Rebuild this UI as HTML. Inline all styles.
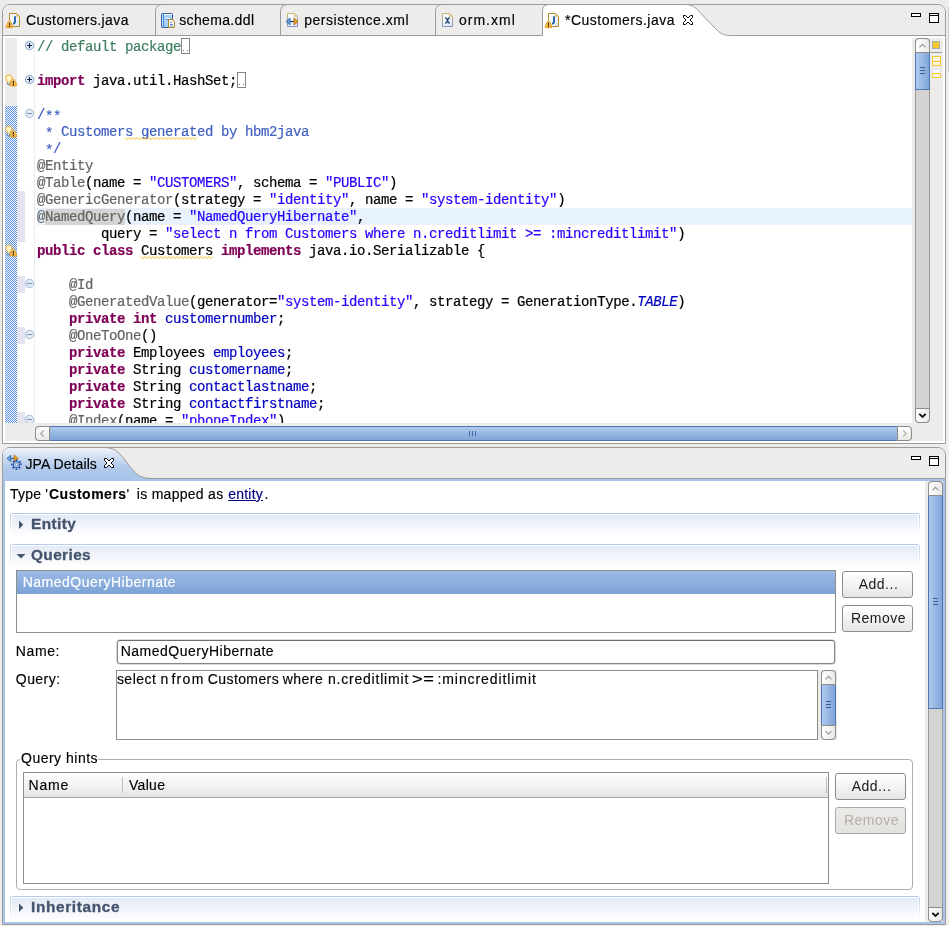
<!DOCTYPE html>
<html>
<head>
<meta charset="utf-8">
<title>Eclipse</title>
<style>
html,body{margin:0;padding:0;}
body{width:949px;height:926px;overflow:hidden;background:#edeceb;position:relative;font-family:"Liberation Sans",sans-serif;font-size:14px;color:#1a1a1a;}
div,span{box-sizing:border-box;}
.a{position:absolute;}
svg{position:absolute;overflow:visible;}
.t{position:absolute;white-space:pre;line-height:16px;height:16px;font-size:14px;color:#000;-webkit-text-stroke:0.15px;}
.ln{position:absolute;left:37px;margin-top:1px;height:17px;line-height:17px;white-space:pre;color:#000;font-family:"Liberation Mono",monospace;font-size:14px;letter-spacing:-0.4px;-webkit-text-stroke:0.2px;}
.k{color:#7f0055;font-weight:bold;}
.s{color:#2a00ff;}
.c{color:#3f7f5f;}
.j{color:#3f5fbf;}
.an{color:#646464;}
.f{color:#0000c0;}
.fi{color:#0000c0;font-style:italic;}
.as{position:relative;top:2px;}
.bx{position:absolute;width:9px;height:16px;border:1px solid #858585;}
.btn{position:absolute;border:1px solid #8f8d8a;border-radius:3px;background:linear-gradient(#ffffff,#f4f3f2 50%,#e7e6e4);text-align:center;font-size:14px;line-height:24px;color:#1a1a1a;}
.sec{position:absolute;left:10px;width:910px;height:24px;border:1px solid transparent;border-bottom:none;border-radius:3px 3px 0 0;background:linear-gradient(#e2e9f5,#ffffff 95%) padding-box,linear-gradient(#b4caea,#ffffff 95%) border-box;box-shadow:inset 0 1px 0 0 #fff,inset 1px 0 0 0 #fff,inset -1px 0 0 0 #fff;}
.sect{position:absolute;font-weight:bold;font-size:14px;color:#46546e;white-space:pre;line-height:16px;-webkit-text-stroke:0.3px;transform:scaleX(1.1);transform-origin:0 0;}
.fold{position:absolute;width:9px;height:9px;border-radius:50%;border:1px solid #9fb6cf;background:#e9f1f8;}
</style>
</head>
<body>
<div id="root" style="position:absolute;left:0;top:0;width:949px;height:926px;will-change:transform;">
<svg width="0" height="0" style="left:0;top:0">
  <defs>
    <linearGradient id="gDoc" x1="0" y1="0" x2="1" y2="1"><stop offset="0" stop-color="#ffffff"/><stop offset="1" stop-color="#dbe7f7"/></linearGradient>
    <linearGradient id="gWarn" x1="0" y1="0" x2="0" y2="1"><stop offset="0" stop-color="#fff3b0"/><stop offset="1" stop-color="#f5a623"/></linearGradient>
    <linearGradient id="gDocB" x1="0" y1="0" x2="0" y2="1"><stop offset="0" stop-color="#c9b66f"/><stop offset="1" stop-color="#8494c4"/></linearGradient>
    <linearGradient id="gThumbV" x1="0" y1="0" x2="1" y2="0"><stop offset="0" stop-color="#a9c5ea"/><stop offset="1" stop-color="#7ea4d6"/></linearGradient>
    <linearGradient id="gThumbH" x1="0" y1="0" x2="0" y2="1"><stop offset="0" stop-color="#a9c5ea"/><stop offset="1" stop-color="#7ea4d6"/></linearGradient>
    <!-- warning triangle 8x8 at 0,0 -->
    <g id="warn">
      <path d="M3.5 0.4 C4.2 0.4 4.4 0.9 4.7 1.5 L6.7 5.8 C7.1 6.8 6.8 7.5 5.8 7.5 L1.2 7.5 C0.2 7.5 -0.1 6.8 0.3 5.8 L2.3 1.5 C2.6 0.9 2.8 0.4 3.5 0.4 Z" fill="url(#gWarn)" stroke="#e39a20" stroke-width="0.9"/>
      <rect x="2.9" y="2.3" width="1.2" height="2.8" fill="#3a2200"/>
      <rect x="2.9" y="5.6" width="1.2" height="1.2" fill="#3a2200"/>
    </g>
    <!-- java file with warning; origin = doc top-left minus (4,0): doc at x 4..15, y 0..14 -->
    <g id="jwarn">
      <path d="M4.5 0.5 L11.5 0.5 L14.5 3.5 L14.5 13.5 L4.5 13.5 Z" fill="url(#gDoc)" stroke="#b38b2d" stroke-width="1"/>
      <path d="M11.2 0.8 L11.2 3.8 L14.2 3.8 Z" fill="#e9c46a"/>
      <path d="M10 3.2 L10 8.6 Q10 10.6 8 10.6" fill="none" stroke="#2563a8" stroke-width="1.9"/>
      <use href="#warn" x="1" y="7.2"/>
    </g>
    <!-- quick-fix bulb + warning, 12x12 -->
    <g id="qf">
      <path d="M3.5 0.5 Q6.6 0.5 6.6 3.4 Q6.6 4.9 5.2 6.2 L5 8 L2 8 L1.8 6.2 Q0.4 4.9 0.4 3.4 Q0.4 0.5 3.5 0.5 Z" fill="#fff6c8" stroke="#e8a828" stroke-width="0.9"/>
      <path d="M2.2 8.3 Q2.2 10.6 3.5 10.6 Q4.8 10.6 4.8 8.3" fill="#e8eef8" stroke="#3f6aa8" stroke-width="0.9"/>
      <use href="#warn" x="4.6" y="4" transform="scale(1)"/>
    </g>
    <g id="fplus">
      <circle cx="4.5" cy="4.5" r="4.1" fill="#e1edf9" stroke="#9bb5d5" stroke-width="1.2"/>
      <path d="M2 4.5 H7 M4.5 2 V7" stroke="#18264a" stroke-width="1.1" fill="none"/>
    </g>
    <g id="fminus">
      <circle cx="4.5" cy="4.5" r="4.1" fill="#e2eff9" stroke="#b3c6da" stroke-width="1.2"/>
      <path d="M2 4.5 H7" stroke="#8793a6" stroke-width="1.1" fill="none"/>
    </g>
  </defs>
</svg>
<!-- ================= EDITOR PANEL ================= -->
<div class="a" style="left:2px;top:4px;width:944px;height:440px;border:1px solid #9e9c99;border-radius:8px 8px 0 0;background:#fff;"></div>
<div class="a" style="left:3px;top:5px;width:942px;height:30px;background:#edeceb;border-radius:7px 7px 0 0;"></div>
<div class="a" style="left:3px;top:35px;width:942px;height:1px;background:#9e9c99;"></div>
<div class="a" style="left:5px;top:38px;width:938px;height:403px;background:#edeceb;"></div>
<div class="a" style="left:17px;top:38px;width:895px;height:385px;background:#fff;"></div>
<div class="a" style="left:5px;top:38px;width:12px;height:385px;background:#edeceb;"></div>
<div class="a" style="left:34px;top:38px;width:1px;height:385px;background:#ececec;"></div>
<div class="a" style="left:37px;top:208px;width:875px;height:17px;background:#e8f2fe;"></div>
<!--TABS-->
<!-- tab separators & active tab -->
<svg width="949" height="40" style="left:0;top:0">
  <g fill="none" stroke="#9e9c99" stroke-width="1">
    <path d="M155.5 35 L155.5 12 Q155.5 4.5 162 4.5"/>
    <path d="M280.5 35 L280.5 12 Q280.5 4.5 287 4.5"/>
    <path d="M435.5 35 L435.5 12 Q435.5 4.5 442 4.5"/>
  </g>
  <!-- active tab -->
  <path d="M542.5 36 L542.5 11 Q542.5 4.5 549 4.5 L686 4.5 C693 5 696 8 700 12.5 L714 27 C718 31.5 722 35.5 730 35.5 L732 36 Z" fill="#ffffff" stroke="none"/>
  <path d="M542.5 35.5 L542.5 11 Q542.5 4.5 549 4.5 L686 4.5 C693 5 696 8 700 12.5 L714 27 C718 31.5 722 35.5 730 35.5" fill="none" stroke="#9e9c99"/>
  <!-- minimize -->
  <rect x="911.5" y="13.5" width="9" height="3" fill="#fff" stroke="#000"/>
  <!-- maximize -->
  <rect x="929.5" y="13.5" width="9" height="9" fill="#fff" stroke="#000"/>
  <rect x="929.5" y="13.5" width="9" height="2" fill="#fff" stroke="#000"/>
</svg>
<div class="t" style="left:26px;top:12px;letter-spacing:.4px">Customers.java</div>
<div class="t" style="left:179.2px;top:12px;letter-spacing:.36px">schema.ddl</div>
<div class="t" style="left:304.3px;top:12px;letter-spacing:.5px">persistence.xml</div>
<div class="t" style="left:459px;top:12px;letter-spacing:1.0px">orm.xml</div>
<div class="t" style="left:565px;top:12px;letter-spacing:.48px">*Customers.java</div>
<svg width="949" height="40" style="left:0;top:0">
  <use href="#jwarn" x="5" y="13"/>
  <use href="#jwarn" x="544" y="13"/>
  <!-- schema.ddl icon -->
  <g>
    <rect x="161.5" y="13.5" width="11" height="14" rx="0.8" fill="#a8d0f6" stroke="#3560ac"/>
    <path d="M163.5 14 V27" stroke="#4a86c8" stroke-width="1"/>
    <path d="M162.5 14.5 V26.5" stroke="#c5e0fa" stroke-width="1"/>
    <rect x="164" y="14" width="8" height="1" fill="#ffffff"/>
    <rect x="166" y="18" width="4" height="1" fill="#ffffff"/>
    <rect x="166" y="19" width="4" height="1" fill="#4f8fd0"/>
    <path d="M168.500 19.500 L172.500 19.500 L174.500 21.500 L174.500 27.500 L168.500 27.500 Z" fill="#fbfdff" stroke="#a88934"/>
    <path d="M172.300 19.800 V21.700 H174.200 Z" fill="#e9c46a"/>
    <path d="M170 22.500 H172 M170 24.500 H173 M170 26 H173" stroke="#6f8fd0" stroke-width="1"/>
  </g>
  <!-- persistence.xml icon -->
  <g>
    <path d="M287.5 13.5 L294.5 13.5 L297.5 16.5 L297.5 26.5 L287.5 26.5 Z" fill="url(#gDoc)" stroke="url(#gDocB)"/>
    <path d="M294.2 13.8 L294.2 16.8 L297.2 16.8 Z" fill="#e9c46a"/>
    <path d="M289 21.5 H295" stroke="#1d3468" stroke-width="1.2"/>
    <path d="M286 21.5 L290 18 L290 25 Z" fill="#6f9fe0" stroke="#1f5f9c" stroke-width="0.8"/>
    <path d="M298 21.5 L294 18 L294 25 Z" fill="#f0a020" stroke="#b06a08" stroke-width="0.8"/>
  </g>
  <!-- orm.xml icon -->
  <g>
    <path d="M442.5 13.5 L449.5 13.5 L452.5 16.5 L452.5 26.5 L442.5 26.5 Z" fill="url(#gDoc)" stroke="url(#gDocB)"/>
    <path d="M449.2 13.8 L449.2 16.8 L452.2 16.8 Z" fill="#e9c46a"/>
    <path d="M445.3 17.5 Q447.5 19 447.5 20.5 Q447.5 22 445.3 23.5 M449.7 17.5 Q447.5 19 447.5 20.5 Q447.5 22 449.7 23.5" stroke="#1f3f6e" stroke-width="1.5" fill="none"/>
  </g>
  <!-- close X -->
  <path d="M683.5 15.5 L685.5 15.5 L688 18 L690.5 15.5 L692.5 15.5 L692.5 17.5 L690 20 L692.5 22.5 L692.5 24.5 L690.5 24.5 L688 22 L685.5 24.5 L683.5 24.5 L683.5 22.5 L686 20 L683.5 17.5 Z" fill="#fff" stroke="#000" stroke-width="1"/>
</svg>
<!--/TABS-->
<!--RULER-->
<!-- range indicator (blue checker) -->
<div class="a" style="left:5px;top:106px;width:12px;height:317px;background:repeating-conic-gradient(#5f93de 0% 25%,#f4f8ff 0% 50%) 0 0/2px 2px;"></div>
<!-- quick diff lavender -->
<div class="a" style="left:17px;top:191px;width:8px;height:51px;background:#e4e4f1;"></div>
<div class="a" style="left:17px;top:276px;width:8px;height:17px;background:#e4e4f1;"></div>
<div class="a" style="left:17px;top:327px;width:8px;height:17px;background:#e4e4f1;"></div>
<div class="a" style="left:17px;top:412px;width:8px;height:11px;background:#e4e4f1;"></div>
<svg width="40" height="423" style="left:0;top:0">
  <use href="#fplus" x="25" y="41"/>
  <use href="#fplus" x="25" y="75"/>
  <use href="#fminus" x="25" y="109"/>
  <use href="#fminus" x="25" y="279"/>
  <use href="#fminus" x="25" y="330"/>
  <clipPath id="cpf"><rect x="20" y="410" width="20" height="13"/></clipPath><g clip-path="url(#cpf)"><use href="#fminus" x="25" y="415"/></g>
  <use href="#qf" x="5.3" y="74.5"/>
  <use href="#qf" x="5.3" y="125.5"/>
  <use href="#qf" x="5.3" y="244.5"/>
</svg>
<!-- collapsed boxes -->
<div class="bx" style="left:181px;top:38px"></div>
<div class="bx" style="left:237px;top:72px"></div>
<div class="a" style="left:183px;top:50px;width:1px;height:1px;background:#777"></div><div class="a" style="left:187px;top:50px;width:1px;height:1px;background:#777"></div>
<div class="a" style="left:239px;top:84px;width:1px;height:1px;background:#777"></div><div class="a" style="left:243px;top:84px;width:1px;height:1px;background:#777"></div>
<!--/RULER-->
<!-- code -->
<div class="a" id="code" style="left:0;top:0;width:912px;height:423px;overflow:hidden;">
<div class="ln" style="top:38px"><span class="c">// default package</span></div>
<div class="ln" style="top:72px"><span class="k">import</span> java.util.HashSet;</div>
<div class="ln" style="top:106px"><span class="j">/<span class="as">*</span><span class="as">*</span></span></div>
<div class="ln" style="top:123px"><span class="j"> <span class="as">*</span> Customers generated by hbm2java</span></div>
<div class="ln" style="top:140px"><span class="j"> <span class="as">*</span>/</span></div>
<div class="ln" style="top:157px"><span class="an">@Entity</span></div>
<div class="ln" style="top:174px"><span class="an">@Table</span>(name = <span class="s">"CUSTOMERS"</span>, schema = <span class="s">"PUBLIC"</span>)</div>
<div class="ln" style="top:191px"><span class="an">@GenericGenerator</span>(strategy = <span class="s">"identity"</span>, name = <span class="s">"system-identity"</span>)</div>
<div class="ln" style="top:208px"><span class="an">@<span style="background:#d4d4d4">NamedQuery</span></span>(name = <span class="s">"NamedQueryHibernate"</span>,</div>
<div class="ln" style="top:225px">        query = <span class="s">"select n from Customers where n.creditlimit >= :mincreditlimit"</span>)</div>
<div class="ln" style="top:242px"><span class="k">public</span> <span class="k">class</span> Customers <span class="k">implements</span> java.io.Serializable {</div>
<div class="ln" style="top:276px">    <span class="an">@Id</span></div>
<div class="ln" style="top:293px">    <span class="an">@GeneratedValue</span>(generator=<span class="s">"system-identity"</span>, strategy = GenerationType.<span class="fi">TABLE</span>)</div>
<div class="ln" style="top:310px">    <span class="k">private</span> <span class="k">int</span> <span class="f">customernumber</span>;</div>
<div class="ln" style="top:327px">    <span class="an">@OneToOne</span>()</div>
<div class="ln" style="top:344px">    <span class="k">private</span> Employees <span class="f">employees</span>;</div>
<div class="ln" style="top:361px">    <span class="k">private</span> String <span class="f">customername</span>;</div>
<div class="ln" style="top:378px">    <span class="k">private</span> String <span class="f">contactlastname</span>;</div>
<div class="ln" style="top:395px">    <span class="k">private</span> String <span class="f">contactfirstname</span>;</div>
<div class="ln" style="top:412px">    <span class="an">@Index</span>(name = <span class="s">"phoneIndex"</span>)</div>
</div>
<svg width="300" height="300" style="left:0;top:0"><polyline points="125 137.5 127 139.5 129 137.5 131 139.5 133 137.5 135 139.5 137 137.5 139 139.5 141 137.5 143 139.5 145 137.5 147 139.5 149 137.5 151 139.5 153 137.5 155 139.5 157 137.5 159 139.5 161 137.5 163 139.5 165 137.5 167 139.5 169 137.5 171 139.5 173 137.5 175 139.5 177 137.5 179 139.5 181 137.5 183 139.5 185 137.5 187 139.5 189 137.5 191 139.5 193 137.5 195 139.5 197 137.5" fill="none" stroke="#f0c020" stroke-width="1"/><polyline points="141 256.5 143 258.5 145 256.5 147 258.5 149 256.5 151 258.5 153 256.5 155 258.5 157 256.5 159 258.5 161 256.5 163 258.5 165 256.5 167 258.5 169 256.5 171 258.5 173 256.5 175 258.5 177 256.5 179 258.5 181 256.5 183 258.5 185 256.5 187 258.5 189 256.5 191 258.5 193 256.5 195 258.5 197 256.5 199 258.5 201 256.5 203 258.5 205 256.5 207 258.5 209 256.5 211 258.5 213 256.5" fill="none" stroke="#f0c020" stroke-width="1"/></svg>
<!--EDSCROLL-->
<!-- vertical scrollbar -->
<div class="a" style="left:915px;top:38px;width:15px;height:385px;background:#d5d4d2;border:1px solid #9a9895;border-radius:4px;"></div>
<div class="a" style="left:915px;top:38px;width:15px;height:15px;background:linear-gradient(90deg,#ffffff,#e9e8e6);border:1px solid #8f8d8a;border-radius:4px 4px 0 0;"></div>
<div class="a" style="left:915px;top:408px;width:15px;height:15px;background:linear-gradient(90deg,#ffffff,#e9e8e6);border:1px solid #8f8d8a;border-radius:0 0 4px 4px;"></div>
<div class="a" style="left:915px;top:53px;width:15px;height:37px;background:linear-gradient(90deg,#b0caee,#7fa5d8);border:1px solid #4f76ae;border-top:none;"></div>
<svg width="20" height="390" style="left:915px;top:38px">
  <path d="M4.5 9.3 L7.5 6.3 L10.5 9.3" fill="none" stroke="#9a9896" stroke-width="1.1"/>
  <path d="M4.3 375.8 L7.5 379 L10.7 375.8" fill="none" stroke="#111" stroke-width="1.8"/>
  <path d="M5 29.5 H10 M5 32.5 H10 M5 35.5 H10" stroke="#3a5f98" stroke-width="1"/>
</svg>
<!-- overview ruler -->
<div class="a" style="left:932px;top:41px;width:8px;height:8px;background:#f5c92a;border:1px solid #aaa9b4;"></div>
<div class="a" style="left:930px;top:52px;width:12px;height:1px;background:#9a9896;"></div>
<div class="a" style="left:932px;top:56px;width:9px;height:6px;background:#fdf6dc;border:1px solid #f5c934;"></div>
<div class="a" style="left:932px;top:61px;width:9px;height:5px;background:#fdf6dc;border:1px solid #f5c934;"></div>
<div class="a" style="left:932px;top:69px;width:9px;height:5px;background:#f8f8fc;border:1px solid #e6e6ef;"></div>
<div class="a" style="left:932px;top:73px;width:9px;height:5px;background:#fdf6dc;border:1px solid #f5c934;"></div>
<!-- horizontal scrollbar -->
<div class="a" style="left:35px;top:426px;width:877px;height:15px;background:#d5d4d2;border:1px solid #9a9895;border-radius:4px;"></div>
<div class="a" style="left:35px;top:426px;width:15px;height:15px;background:linear-gradient(#ffffff,#e9e8e6);border:1px solid #8f8d8a;border-radius:4px 0 0 4px;"></div>
<div class="a" style="left:897px;top:426px;width:15px;height:15px;background:linear-gradient(#ffffff,#e9e8e6);border:1px solid #8f8d8a;border-radius:0 4px 4px 0;"></div>
<div class="a" style="left:50px;top:426px;width:847px;height:15px;background:linear-gradient(#b0caee,#7fa5d8);border:1px solid #4f76ae;border-left:none;border-right:none;"></div>
<svg width="880" height="16" style="left:35px;top:426px">
  <path d="M8.7 4.5 L5.7 7.5 L8.7 10.5" fill="none" stroke="#a9a7a4" stroke-width="1.1"/>
  <path d="M868.3 4.5 L871.3 7.5 L868.3 10.5" fill="none" stroke="#b0aeab" stroke-width="1.1"/>
  <path d="M434.5 5 V10 M437.5 5 V10 M440.5 5 V10" stroke="#3f6aa6" stroke-width="1"/>
</svg>
<!--/EDSCROLL-->
<div class="a" style="left:948px;top:7px;width:1px;height:65px;background:#cfcdca;"></div>
<div class="a" style="left:947px;top:72px;width:2px;height:854px;background:#f2f1f0;"></div>
<!-- ================= JPA DETAILS PANEL ================= -->
<!--JPA-->
<!-- panel frame -->
<div class="a" style="left:2px;top:447px;width:944px;height:478px;border:1px solid #9e9c99;border-radius:8px 8px 0 0;background:#edeceb;"></div>
<div class="a" style="left:3px;top:479px;width:942px;height:445px;background:#a8c3e9;"></div>
<div class="a" style="left:3px;top:448px;width:942px;height:30px;background:#edeceb;border-radius:7px 7px 0 0;"></div>
<div class="a" style="left:3px;top:478px;width:942px;height:1px;background:#9e9c99;"></div>
<div class="a" style="left:5px;top:481px;width:938px;height:441px;background:#edeceb;"></div>
<div class="a" style="left:5px;top:481px;width:920px;height:441px;background:#ffffff;"></div>
<svg width="949" height="40" style="left:0;top:444px">
  <defs><linearGradient id="gTab" x1="0" y1="0" x2="0" y2="1"><stop offset="0" stop-color="#eef3fa"/><stop offset="0.6" stop-color="#b2caec"/><stop offset="1" stop-color="#a8c3e9"/></linearGradient></defs>
  <path d="M3 35 L3 10.5 Q3 4 9.5 4 L104 4 C117 4 121 11 128 20 C135 29 139 34.5 152 34.5 L152 35 Z" fill="url(#gTab)"/>
  <path d="M104 3.5 C117 3.5 121 11 128 20 C135 29 139 34.5 152 34.5" fill="none" stroke="#9e9c99"/>
  <!-- close X -->
  <path transform="translate(0,3)" d="M104.5 11.5 L106.5 11.5 L109 14 L111.5 11.5 L113.5 11.5 L113.5 13.5 L111 16 L113.5 18.5 L113.5 20.5 L111.5 20.5 L109 18 L106.5 20.5 L104.5 20.5 L104.5 18.5 L107 16 L104.5 13.5 Z" fill="#fff" stroke="#000"/>
  <!-- min / max -->
  <rect x="911.5" y="12.500" width="9" height="3" fill="#fff" stroke="#000"/>
  <rect x="929.5" y="12.5" width="9" height="9" fill="#fff" stroke="#000"/>
  <rect x="929.5" y="12.5" width="9" height="2" fill="#fff" stroke="#000"/>
  <!-- JPA details icon -->
  <g>
    <path d="M10 14.4 H15" stroke="#2a5a9a" stroke-width="1.1"/>
    <path d="M7 14.4 L10.8 11.2 L10.8 17.6 Z" fill="#7aa7e6" stroke="#1f5f9c" stroke-width="0.8"/>
    <path d="M18.2 14.4 L14.2 11 L14.2 17.8 Z" fill="#f0a020" stroke="#b06a08" stroke-width="0.8"/>
    <circle cx="16.4" cy="20.6" r="4.5" fill="none" stroke="#2d5cae" stroke-width="1.8" stroke-dasharray="1.75 1.784" transform="rotate(-14 16.4 20.6)"/>
    <circle cx="16.4" cy="20.6" r="3.1" fill="#cfdcf0" stroke="#2d5cae" stroke-width="1.1"/>
    <circle cx="16.4" cy="20.6" r="1.25" fill="#ffffff" stroke="#3b69b6" stroke-width="0.8"/>
  </g>
</svg>
<div class="t" style="left:25.5px;top:456px;letter-spacing:.08px">JPA Details</div>
<!-- heading line -->
<div class="t" style="left:10px;top:486px;letter-spacing:.2px">Type '</div>
<div class="t" style="left:49px;top:486px;font-weight:bold;letter-spacing:.5px">Customers</div>
<div class="t" style="left:126.6px;top:486px;">'</div>
<div class="t" style="left:136.8px;top:486px;letter-spacing:.28px;">is mapped as</div>
<div class="t" style="left:228.3px;top:486px;letter-spacing:.2px;color:#000080;text-decoration:underline">entity</div>
<div class="t" style="left:264.5px;top:486px;">.</div>
<!-- sections -->
<div class="sec" style="top:513px"></div>
<div class="sec" style="top:544px"></div>
<div class="sec" style="top:896px;height:26px;"></div>
<svg width="40" height="480" style="left:0;top:444px">
  <path d="M19 76.4 L23.3 80.7 L19 85 Z" fill="#46546e"/>
  <path d="M16.6 109.9 L25.4 109.9 L21 114.4 Z" fill="#46546e"/>
  <path d="M19 459.4 L23.3 463.7 L19 468 Z" fill="#46546e"/>
</svg>
<div class="sect" style="left:31px;top:516px;letter-spacing:.35px">Entity</div>
<div class="sect" style="left:31px;top:547px;letter-spacing:.35px">Queries</div>
<div class="sect" style="left:31px;top:899px;letter-spacing:.58px">Inheritance</div>
<!-- list -->
<div class="a" style="left:16px;top:570px;width:820px;height:63px;border:1px solid #8f8d8a;background:#fff;"></div>
<div class="a" style="left:17px;top:571px;width:818px;height:23px;background:linear-gradient(#9dbbe4,#7ba2d6);"></div>
<div class="t" style="left:22.7px;top:574px;color:#fff;letter-spacing:.5px">NamedQueryHibernate</div>
<div class="btn" style="left:842px;top:571px;width:71px;height:27px;letter-spacing:.5px;padding-left:2px">Add...</div>
<div class="btn" style="left:842px;top:605px;width:71px;height:27px;letter-spacing:.5px;padding-left:2px">Remove</div>
<!-- name -->
<div class="t" style="left:15.8px;top:643px;letter-spacing:.6px">Name:</div>
<div class="a" style="left:116px;top:639px;width:720px;height:26px;border:1px solid #dcdad7;border-radius:4px;background:#fff;"></div>
<div class="a" style="left:117px;top:640px;width:718px;height:24px;border:1px solid #8a8784;border-top-color:#6f6c69;border-radius:3px;background:#fff;"></div>
<div class="t" style="left:120.7px;top:643px;letter-spacing:.5px">NamedQueryHibernate</div>
<!-- query -->
<div class="t" style="left:15.8px;top:671px;letter-spacing:.45px">Query:</div>
<div class="a" style="left:116px;top:670px;width:702px;height:70px;border:1px solid #8f8d8a;background:#fff;"></div>
<div class="t" style="left:116.9px;top:671px;letter-spacing:0.48px;">select</div>
<div class="t" style="left:160.6px;top:671px;letter-spacing:0.50px;">n</div>
<div class="t" style="left:171.4px;top:671px;letter-spacing:1.33px;">from</div>
<div class="t" style="left:207.8px;top:671px;letter-spacing:0.40px;">Customers</div>
<div class="t" style="left:282.7px;top:671px;letter-spacing:0.49px;">where</div>
<div class="t" style="left:327.9px;top:671px;letter-spacing:0.80px;">n.creditlimit</div>
<div class="t" style="left:412.2px;top:671px;letter-spacing:0.4px;transform:scaleX(1.3);transform-origin:0 0;">&gt;=</div>
<div class="t" style="left:437.5px;top:671px;letter-spacing:0.91px;">:mincreditlimit</div>
<!-- query textarea scrollbar -->
<div class="a" style="left:818px;top:670px;width:19px;height:70px;background:#edeceb;"></div>
<div class="a" style="left:821px;top:670px;width:15px;height:70px;background:#d5d4d2;border:1px solid #9a9895;border-radius:4px;"></div>
<div class="a" style="left:821px;top:670px;width:15px;height:15px;background:linear-gradient(90deg,#ffffff,#e9e8e6);border:1px solid #8f8d8a;border-radius:4px 4px 0 0;"></div>
<div class="a" style="left:821px;top:725px;width:15px;height:15px;background:linear-gradient(90deg,#ffffff,#e9e8e6);border:1px solid #8f8d8a;border-radius:0 0 4px 4px;"></div>
<div class="a" style="left:821px;top:685px;width:15px;height:40px;background:linear-gradient(90deg,#b0caee,#7fa5d8);border:1px solid #4f76ae;border-top:none;border-bottom:none;"></div>
<svg width="16" height="72" style="left:821px;top:670px">
  <path d="M4.5 9.3 L7.5 6.3 L10.5 9.3" fill="none" stroke="#9a9896" stroke-width="1.1"/>
  <path d="M4.5 61.2 L7.5 64.2 L10.5 61.2" fill="none" stroke="#9a9896" stroke-width="1.1"/>
  <path d="M5 31.5 H10 M5 34.5 H10 M5 37.5 H10" stroke="#3a5f98" stroke-width="1"/>
</svg>
<!-- query hints group -->
<div class="a" style="left:16px;top:759px;width:897px;height:131px;border:1px solid #b0aeab;border-radius:4px;"></div>
<div class="a" style="left:20px;top:752px;width:77.5px;height:16px;background:#fff;"></div>
<div class="t" style="left:21px;top:750px;letter-spacing:.5px;word-spacing:0px">Query hints</div>
<div class="a" style="left:23px;top:772px;width:806px;height:112px;border:1px solid #8f8d8a;background:#fff;"></div>
<div class="a" style="left:24px;top:773px;width:804px;height:25px;background:linear-gradient(#fdfdfd,#f3f2f1 55%,#e4e3e1);border-bottom:1px solid #a8a6a3;"></div>
<div class="a" style="left:122px;top:777px;width:1px;height:16px;background:#c2c0bd;"></div>
<div class="a" style="left:826px;top:777px;width:1px;height:16px;background:#c2c0bd;"></div>
<div class="t" style="left:28.6px;top:777px;letter-spacing:.8px">Name</div>
<div class="t" style="left:129px;top:777px;letter-spacing:.3px">Value</div>
<div class="btn" style="left:835px;top:773px;width:71px;height:27px;letter-spacing:.5px;padding-left:2px">Add...</div>
<div class="btn" style="left:835px;top:807px;width:71px;height:27px;letter-spacing:.5px;color:#b3afab;-webkit-text-stroke:0;background:linear-gradient(#eceae8,#e4e2df);border-color:#a9a7a4;padding-left:2px">Remove</div>
<!-- panel vertical scrollbar -->
<div class="a" style="left:928px;top:481px;width:15px;height:441px;background:#d5d4d2;border:1px solid #9a9895;border-radius:4px;"></div>
<div class="a" style="left:928px;top:481px;width:15px;height:15px;background:linear-gradient(90deg,#ffffff,#e9e8e6);border:1px solid #8f8d8a;border-radius:4px 4px 0 0;"></div>
<div class="a" style="left:928px;top:907px;width:15px;height:15px;background:linear-gradient(90deg,#ffffff,#e9e8e6);border:1px solid #8f8d8a;border-radius:0 0 4px 4px;"></div>
<div class="a" style="left:928px;top:496px;width:15px;height:213px;background:linear-gradient(90deg,#b0caee,#7fa5d8);border:1px solid #4f76ae;border-top:none;"></div>
<svg width="16" height="445" style="left:928px;top:481px">
  <path d="M4.5 9.3 L7.5 6.3 L10.5 9.3" fill="none" stroke="#9a9896" stroke-width="1.1"/>
  <path d="M4.3 431.8 L7.5 435 L10.7 431.8" fill="none" stroke="#111" stroke-width="1.8"/>
  <path d="M5 117.5 H10 M5 120.5 H10 M5 123.5 H10" stroke="#3a5f98" stroke-width="1"/>
</svg>
<!--/JPA-->
</div>
</body>
</html>
